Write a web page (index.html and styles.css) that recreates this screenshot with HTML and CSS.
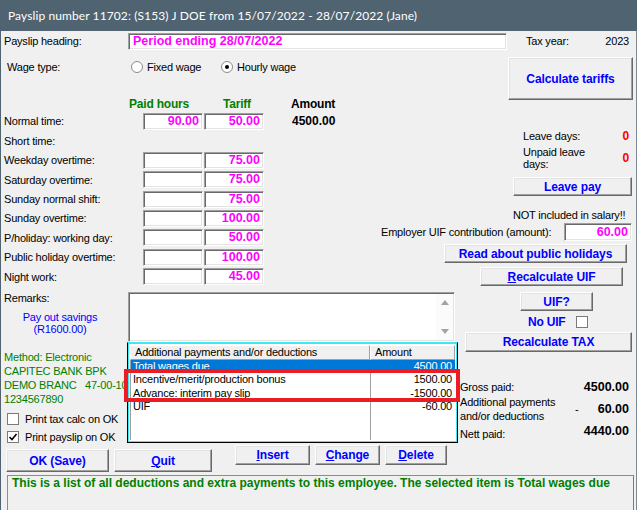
FILE: index.html
```html
<!DOCTYPE html>
<html lang="en">
<head>
    <meta charset="UTF-8">
    <title>Payslip number 11702</title>
    <link rel="stylesheet" href="styles.css">
</head>
<body>
    <div class="window">
        <div class="titlebar">Payslip number 11702: (S153) J DOE from 15/07/2022 - 28/07/2022 (Jane)</div>
        <div class="client">
            <div class="heading-row">
                <span class="lbl heading-lbl">Payslip heading:</span>
                <div class="field heading-field">Period ending 28/07/2022</div>
                <span class="lbl taxyear-lbl">Tax year:</span>
                <span class="lbl taxyear">2023</span>
            </div>

            <div class="upper">
                <div class="wages">
                    <div class="wage-type">
                        <span class="wage-lbl">Wage type:</span>
                        <label class="radio-opt first"><span class="radio"></span>Fixed wage</label>
                        <label class="radio-opt"><span class="radio on"></span>Hourly wage</label>
                    </div>
                    <div class="col-heads">
                        <span class="head-hours">Paid hours</span>
                        <span class="head-tariff">Tariff</span>
                        <span class="head-amount">Amount</span>
                    </div>
                    <div class="rate-row"><span class="rate-lbl">Normal time:</span><div class="field num">90.00</div><div class="field num">50.00</div><span class="amount">4500.00</span></div>
                    <div class="rate-row"><span class="rate-lbl">Short time:</span></div>
                    <div class="rate-row"><span class="rate-lbl">Weekday overtime:</span><div class="field num"></div><div class="field num">75.00</div></div>
                    <div class="rate-row"><span class="rate-lbl">Saturday overtime:</span><div class="field num"></div><div class="field num">75.00</div></div>
                    <div class="rate-row"><span class="rate-lbl">Sunday normal shift:</span><div class="field num"></div><div class="field num">75.00</div></div>
                    <div class="rate-row"><span class="rate-lbl">Sunday overtime:</span><div class="field num"></div><div class="field num">100.00</div></div>
                    <div class="rate-row"><span class="rate-lbl">P/holiday: working day:</span><div class="field num"></div><div class="field num">50.00</div></div>
                    <div class="rate-row"><span class="rate-lbl">Public holiday overtime:</span><div class="field num"></div><div class="field num">100.00</div></div>
                    <div class="rate-row"><span class="rate-lbl">Night work:</span><div class="field num"></div><div class="field num">45.00</div></div>
                </div>

                <div class="side">
                    <button class="btn calc-btn">Calculate tariffs</button>
                    <div class="leave-row"><span>Leave days:</span><span class="zero">0</span></div>
                    <div class="leave-row unpaid"><span class="unpaid-lbl">Unpaid leave<br>days:</span><span class="zero">0</span></div>
                    <button class="btn leave-pay">Leave pay</button>
                    <div class="note">NOT included in salary!!</div>
                    <div class="uif-contrib">
                        <span>Employer UIF contribution (amount):</span>
                        <div class="field num uif-field">60.00</div>
                    </div>
                    <button class="btn holidays-btn">Read about public holidays</button>
                    <button class="btn recalc-uif"><u>R</u>ecalculate UIF</button>
                </div>
            </div>

            <div class="lower">
                <div class="notes">
                    <div class="remarks-lbl">Remarks:</div>
                    <div class="savings">Pay out savings<br>(R1600.00)</div>
                    <div class="method">
                        <div>Method: Electronic</div>
                        <div>CAPITEC BANK BPK</div>
                        <div><span class="branch">DEMO BRANC</span><span class="branch-code">47-00-10</span></div>
                        <div>1234567890</div>
                    </div>
                    <label class="check-row"><span class="check"></span>Print tax calc on OK</label>
                    <label class="check-row"><span class="check">
                        <svg width="10" height="10" viewBox="0 0 10 10"><path d="M1.5 5 L4 7.5 L8.5 2" fill="none" stroke="#000" stroke-width="1.6"/></svg>
                    </span>Print payslip on OK</label>
                </div>

                <div class="lists">
                    <div class="remarks-box">
                        <div class="remarks-text"></div>
                        <div class="scroll">
                            <span class="arrow up"></span>
                            <span class="arrow down"></span>
                        </div>
                    </div>
                    <div class="list">
                        <div class="list-head">
                            <span class="cell desc">Additional payments and/or deductions</span>
                            <span class="cell amt">Amount</span>
                        </div>
                        <div class="list-body">
                            <div class="list-row selected"><span class="desc">Total wages due</span><span class="amt">4500.00</span></div>
                            <div class="list-row"><span class="desc">Incentive/merit/production bonus</span><span class="amt">1500.00</span></div>
                            <div class="list-row"><span class="desc">Advance: interim pay slip</span><span class="amt">-1500.00</span></div>
                            <div class="list-row"><span class="desc">UIF</span><span class="amt">-60.00</span></div>
                        </div>
                    </div>
                    <div class="mark"></div>
                </div>

                <div class="totals">
                    <button class="btn uif-q">UIF?</button>
                    <label class="no-uif">No UIF <span class="check"></span></label>
                    <button class="btn recalc-tax">Recalculate TAX</button>
                    <div class="sum-row"><span>Gross paid:</span><span class="sum">4500.00</span></div>
                    <div class="sum-row extra">
                        <span class="extra-lbl">Additional payments<br>and/or deductions</span>
                        <span class="minus">-</span>
                        <span class="sum">60.00</span>
                    </div>
                    <div class="sum-row nett"><span class="nett-lbl">Nett paid:</span><span class="sum">4440.00</span></div>
                </div>
            </div>

            <div class="actions">
                <button class="btn ok-btn">OK (Save)</button>
                <button class="btn quit-btn"><u>Q</u>uit</button>
                <button class="btn small insert-btn"><u>I</u>nsert</button>
                <button class="btn small change-btn"><u>C</u>hange</button>
                <button class="btn small delete-btn"><u>D</u>elete</button>
            </div>

            <div class="status">This is a list of all deductions and extra payments to this employee. The selected item is Total wages due</div>
        </div>
    </div>
</body>
</html>
```
FILE: styles.css
```css
:root {
    --face: #f0f0f0;
    --frame: #4f6370;
    --magenta: #ff00ff;
    --green: #008000;
    --blue: #0000ff;
    --red: #ff0000;
}
body {
    margin: 0;
    font-family: "Liberation Sans", Arial, sans-serif;
    font-size: 11px;
    letter-spacing: -0.2px;
    color: #000;
}
.window {
    width: 637px;
    height: 510px;
    background: var(--face);
    overflow: hidden;
}
.titlebar {
    height: 31px;
    line-height: 31px;
    padding-left: 8px;
    background: var(--frame);
    color: #fff;
    font-family: Lato, "Noto Sans", sans-serif;
    font-size: 12px;
    letter-spacing: 0.1px;
    white-space: nowrap;
}
.client {
    height: 479px;
    box-sizing: border-box;
    border-left: 1px solid var(--frame);
    border-right: 1px solid #7d8a93;
    padding-left: 3px;
    overflow: hidden;
}

/* sunken edit box and raised button, classic look */
.field {
    box-sizing: border-box;
    background: #fff;
    border: 1px solid;
    border-color: #a0a0a0 #fff #fff #a0a0a0;
    box-shadow: inset 1px 1px 0 #696969, inset -1px -1px 0 #e3e3e3;
    color: var(--magenta);
    font-weight: bold;
    font-size: 12.5px;
    letter-spacing: 0;
}
.btn {
    box-sizing: border-box;
    display: block;
    padding: 0;
    background: var(--face);
    border: 1px solid;
    border-color: #fff #696969 #696969 #fff;
    box-shadow: inset -1px -1px 0 #a0a0a0, inset 1px 1px 0 #e3e3e3;
    color: var(--blue);
    font-family: "Liberation Sans", Arial, sans-serif;
    font-weight: bold;
    font-size: 12px;
    letter-spacing: -0.1px;
}
.btn u {
    text-decoration-thickness: 1px;
}

/* heading */
.heading-row {
    display: flex;
    align-items: flex-start;
    height: 21px;
}
.lbl {
    margin-top: 3px;
    line-height: 14px;
}
.heading-lbl {
    width: 124px;
}
.heading-field {
    width: 379px;
    height: 17px;
    margin-top: 2px;
    padding-left: 4px;
    line-height: 15px;
}
.taxyear-lbl {
    margin-left: 19px;
}
.taxyear {
    margin-left: auto;
    margin-right: 7px;
}

/* upper block */
.upper {
    display: grid;
    grid-template-columns: 356px 1fr;
    height: 236px;
}
.wage-type {
    display: flex;
    align-items: center;
    height: 16px;
    margin-top: 7px;
    padding-left: 3px;
}
.wage-lbl {
    width: 124px;
}
.radio-opt {
    display: flex;
    align-items: center;
    gap: 4px;
}
.radio-opt.first {
    width: 90px;
}
.radio {
    box-sizing: border-box;
    width: 12px;
    height: 12px;
    border-radius: 50%;
    border: 1px solid #8a8a8a;
    background: #fff;
    display: flex;
    align-items: center;
    justify-content: center;
}
.radio.on::after {
    content: "";
    width: 4px;
    height: 4px;
    border-radius: 50%;
    background: #000;
}
.col-heads {
    display: flex;
    align-items: center;
    height: 14.8px;
    margin-top: 22px;
    padding-left: 125px;
    font-weight: bold;
    font-size: 12px;
}
.head-hours {
    width: 94px;
    color: var(--green);
}
.head-tariff {
    width: 68px;
    color: var(--green);
}
.rate-row {
    display: flex;
    align-items: center;
    height: 19.4px;
}
.rate-lbl {
    width: 139px;
}
.field.num {
    width: 60px;
    height: 17px;
    padding-right: 3px;
    text-align: right;
    line-height: 15px;
}
.field.num + .field.num {
    margin-left: 1px;
}
.amount {
    margin-left: 28px;
    font-weight: bold;
    font-size: 12px;
    letter-spacing: 0;
}

/* right side */
.side {
    display: flex;
    flex-direction: column;
    align-items: flex-start;
}
.calc-btn {
    margin-top: 5px;
    margin-left: 148px;
    width: 125px;
    height: 43px;
}
.leave-row {
    display: flex;
    justify-content: space-between;
    align-items: center;
    width: 106px;
    margin-top: 29px;
    margin-left: 163px;
    line-height: 14px;
}
.leave-row.unpaid {
    margin-top: 3px;
    line-height: 12px;
}
.zero {
    color: var(--red);
    font-weight: bold;
    font-size: 12px;
}
.leave-pay {
    margin-top: 7px;
    margin-left: 153px;
    width: 119px;
    height: 19px;
}
.note {
    margin-top: 12px;
    margin-left: 153px;
    line-height: 14px;
}
.uif-contrib {
    display: flex;
    align-items: center;
    justify-content: space-between;
    width: 251px;
    height: 18px;
    margin-top: 1px;
    margin-left: 21px;
}
.uif-field.num {
    width: 68px;
    height: 18px;
    line-height: 16px;
}
.holidays-btn {
    margin-top: 3px;
    margin-left: 84px;
    width: 183px;
    height: 19px;
}
.recalc-uif {
    margin-top: 4px;
    margin-left: 120px;
    width: 143px;
    height: 19px;
}

/* lower block */
.lower {
    display: grid;
    grid-template-columns: 123px 331px 1fr;
    height: 157px;
}
.remarks-lbl {
    margin-top: 3px;
    line-height: 14px;
}
.savings {
    width: 112px;
    margin-top: 5.5px;
    text-align: center;
    line-height: 12px;
    color: var(--blue);
}
.method {
    margin-top: 15px;
    line-height: 14.2px;
    color: var(--green);
    white-space: nowrap;
}
.branch {
    display: inline-block;
    width: 70px;
    vertical-align: top;
}
.branch-code {
    margin-left: 11px;
}
.check-row {
    display: flex;
    align-items: center;
    gap: 6px;
    height: 18.5px;
    padding-left: 3px;
    white-space: nowrap;
}
.check-row:first-of-type {
    margin-top: 3px;
}
.check {
    box-sizing: border-box;
    width: 12px;
    height: 12px;
    border: 1px solid #7a7a7a;
    background: #fff;
    display: flex;
    align-items: center;
    justify-content: center;
}
.lists {
    position: relative;
}
.remarks-box {
    display: flex;
    box-sizing: border-box;
    width: 327px;
    height: 50px;
    margin-top: 4px;
    margin-left: 1px;
    background: #fff;
    border: 1px solid;
    border-color: #a0a0a0 #fff #fff #a0a0a0;
    box-shadow: inset 1px 1px 0 #696969, inset -1px -1px 0 #e3e3e3;
}
.remarks-text {
    flex: 1;
}
.scroll {
    width: 17px;
    margin: 1px 1px 1px 0;
    display: flex;
    flex-direction: column;
    justify-content: space-between;
    align-items: center;
    padding: 6px 0;
    background: #fbfbfb;
}
.arrow {
    width: 0;
    height: 0;
    border-left: 4px solid transparent;
    border-right: 4px solid transparent;
}
.arrow.up {
    border-bottom: 5px solid #a3a3a3;
}
.arrow.down {
    border-top: 5px solid #a3a3a3;
}
.list {
    box-sizing: border-box;
    display: flex;
    flex-direction: column;
    width: 331px;
    height: 101px;
    padding: 2px;
    background: #fff;
    border: 1px solid #000;
    border-top-color: #3ee8f0;
    box-shadow: inset 0 0 0 1px #3ee8f0;
}
.list-head {
    display: flex;
    height: 15px;
}
.list-head .cell {
    box-sizing: border-box;
    height: 15px;
    line-height: 13px;
    padding-left: 4px;
    background: var(--face);
    border: 1px solid;
    border-color: #fff #a0a0a0 #a0a0a0 #fff;
}
.desc {
    width: 240px;
    flex: none;
    white-space: nowrap;
}
.amt {
    flex: 1;
}
.list-body {
    flex: 1;
    border-left: 1px solid #a0a0a0;
    background: linear-gradient(to right, transparent 239px, #a0a0a0 239px, #a0a0a0 240px, transparent 240px);
}
.list-row {
    display: flex;
    height: 13.4px;
    line-height: 13.4px;
}
.list-row .desc {
    padding-left: 2px;
    box-sizing: border-box;
}
.list-row .amt {
    text-align: right;
    padding-right: 3px;
}
.list-row.selected {
    background: #0078d7;
    color: #fff;
}
.mark {
    position: absolute;
    left: -3px;
    top: 81px;
    width: 336px;
    height: 33px;
    box-sizing: border-box;
    border: 4px solid #ed1c24;
}

/* totals */
.totals {
    display: flex;
    flex-direction: column;
    align-items: flex-start;
}
.uif-q {
    margin-top: 4px;
    margin-left: 62px;
    width: 73px;
    height: 19px;
}
.no-uif {
    display: flex;
    align-items: center;
    gap: 11px;
    height: 13px;
    margin-top: 4px;
    margin-left: 70px;
    color: var(--blue);
    font-weight: bold;
    font-size: 12px;
}
.recalc-tax {
    margin-top: 4px;
    margin-left: 7px;
    width: 167px;
    height: 20px;
}
.sum-row {
    display: flex;
    align-items: flex-start;
    justify-content: space-between;
    align-self: stretch;
    margin-top: 28px;
    padding: 0 7px 0 2px;
    line-height: 14px;
}
.sum {
    font-weight: bold;
    font-size: 12.5px;
    letter-spacing: 0;
}
.sum-row.extra {
    margin-top: 2px;
    align-items: center;
    line-height: 13.6px;
}
.extra-lbl {
    width: 115px;
}
.minus {
    margin-right: auto;
}
.sum-row.nett {
    margin-top: 1px;
}
.nett-lbl {
    padding-top: 3px;
}

/* bottom buttons and status */
.actions {
    display: flex;
    align-items: flex-start;
    height: 29px;
}
.ok-btn {
    margin-top: 4px;
    margin-left: 2px;
    width: 103px;
    height: 23px;
}
.quit-btn {
    margin-top: 4px;
    margin-left: 5px;
    width: 98px;
    height: 23px;
}
.btn.small {
    height: 20px;
    margin-left: 5px;
}
.insert-btn {
    width: 75px;
}
.btn.small.insert-btn {
    margin-left: 23px;
}
.change-btn {
    width: 65px;
}
.delete-btn {
    width: 62px;
}
.status {
    box-sizing: border-box;
    width: 627px;
    height: 40px;
    margin-top: 1px;
    margin-left: 3px;
    padding-left: 4px;
    border: 1px solid #8c8c8c;
    border-right-color: #7a7a7a;
    line-height: 14px;
    color: var(--green);
    font-weight: bold;
    font-size: 12px;
    letter-spacing: 0;
    white-space: nowrap;
    overflow: hidden;
}
```
